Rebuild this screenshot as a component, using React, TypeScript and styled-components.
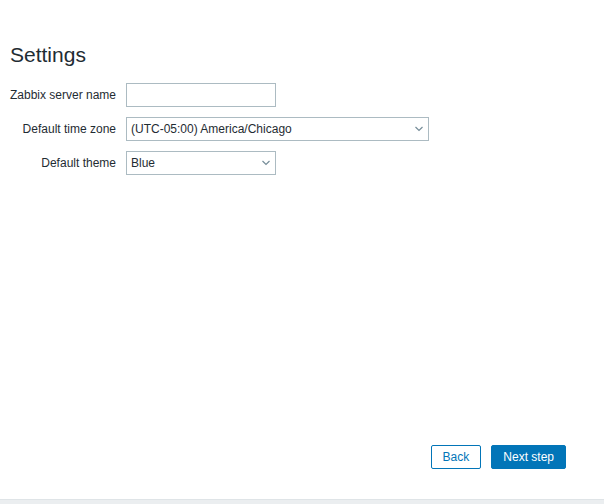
import React, { useState } from "react";
import styled, { createGlobalStyle } from "styled-components";

const GlobalStyle = createGlobalStyle`
  html, body {
    margin: 0;
    padding: 0;
    background: #ebeef0;
  }
  body {
    font-family: Arial, "Liberation Sans", sans-serif;
    font-size: 12px;
    color: #1f2c33;
  }
`;

const timeZones = ["(UTC-05:00) America/Chicago", "(UTC+00:00) UTC", "(UTC+01:00) Europe/Riga"];
const themes = ["Blue", "Dark", "High-contrast light", "High-contrast dark"];

const App: React.FC = () => {
  // form state
  const [serverName, setServerName] = useState<string>("");
  const [timeZone, setTimeZone] = useState<string>(timeZones[0]);
  const [theme, setTheme] = useState<string>(themes[0]);

  return (
    <>
      <GlobalStyle />
      <Page>
        <Title>Settings</Title>
        <Form>
          <Row>
            <Label htmlFor="name">Zabbix server name</Label>
            <TextInput
              id="name"
              type="text"
              value={serverName}
              onChange={(e) => setServerName(e.target.value)}
            />
          </Row>
          <Row>
            <Label htmlFor="tz">Default time zone</Label>
            <SelectBox $wide>
              <Select id="tz" value={timeZone} onChange={(e) => setTimeZone(e.target.value)}>
                {timeZones.map((tz) => (
                  <option key={tz}>{tz}</option>
                ))}
              </Select>
              <Chevron />
            </SelectBox>
          </Row>
          <Row>
            <Label htmlFor="theme">Default theme</Label>
            <SelectBox>
              <Select id="theme" value={theme} onChange={(e) => setTheme(e.target.value)}>
                {themes.map((t) => (
                  <option key={t}>{t}</option>
                ))}
              </Select>
              <Chevron />
            </SelectBox>
          </Row>
        </Form>
        <Buttons>
          <BackButton>Back</BackButton>
          <NextButton>Next step</NextButton>
        </Buttons>
      </Page>
    </>
  );
};

export default App;

const Chevron: React.FC = () => (
  <ChevronIcon width="10" height="6" viewBox="0 0 10 6">
    <path d="M1.5 1l3.5 3.5 3.5-3.5" fill="none" stroke="#768d99" strokeWidth="1.2" />
  </ChevronIcon>
);

// Styled Components
const Page = styled.div`
  display: flex;
  flex-direction: column;
  height: 500px;
  box-sizing: border-box;
  background: #ffffff;
  border-bottom: 1px solid #dfe4e7;
  padding: 0 38px 30px 10px;
`;

const Title = styled.h1`
  margin: 42px 0 15px;
  font-size: 21px;
  font-weight: normal;
  line-height: 26px;
  color: #1f2c33;
`;

const Form = styled.div`
  display: flex;
  flex-direction: column;
  gap: 10px;
`;

const Row = styled.div`
  display: flex;
  align-items: center;
  gap: 10px;
`;

const Label = styled.label`
  width: 106px;
  text-align: right;
  white-space: nowrap;
`;

const TextInput = styled.input`
  box-sizing: border-box;
  width: 150px;
  height: 24px;
  margin: 0;
  padding: 0 5px;
  border: 1px solid #acbbc2;
  border-radius: 0;
  font-family: inherit;
  font-size: 12px;
  color: #1f2c33;
  outline: none;
`;

const SelectBox = styled.div<{ $wide?: boolean }>`
  position: relative;
  width: ${(p) => (p.$wide ? "303px" : "150px")};
  height: 24px;
`;

const Select = styled.select`
  appearance: none;
  box-sizing: border-box;
  width: 100%;
  height: 24px;
  margin: 0;
  padding: 0 20px 0 4px;
  border: 1px solid #acbbc2;
  border-radius: 0;
  background: #ffffff;
  font-family: inherit;
  font-size: 12px;
  color: #1f2c33;
  outline: none;
`;

const ChevronIcon = styled.svg`
  position: absolute;
  right: 5px;
  top: 9px;
  pointer-events: none;
`;

const Buttons = styled.div`
  display: flex;
  justify-content: flex-end;
  gap: 10px;
  margin-top: auto;
`;

const BaseButton = styled.button`
  box-sizing: border-box;
  height: 24px;
  padding: 0 11px;
  border: 1px solid #0275b8;
  border-radius: 2px;
  font-family: inherit;
  font-size: 12px;
  cursor: pointer;
`;

const BackButton = styled(BaseButton)`
  background: #ffffff;
  color: #0275b8;
`;

const NextButton = styled(BaseButton)`
  background: #0275b8;
  color: #ffffff;
`;
